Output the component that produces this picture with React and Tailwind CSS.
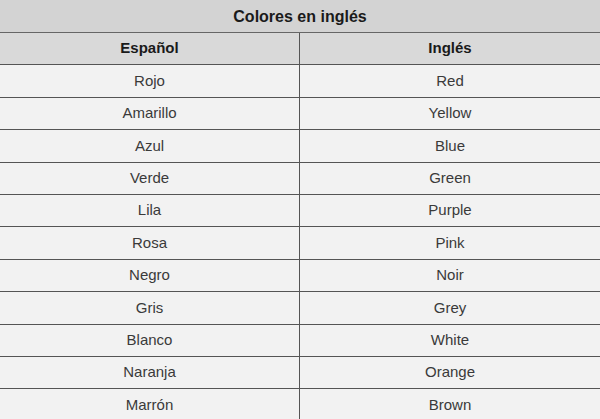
export default function App() {
  const rows = [
    ["Rojo", "Red"],
    ["Amarillo", "Yellow"],
    ["Azul", "Blue"],
    ["Verde", "Green"],
    ["Lila", "Purple"],
    ["Rosa", "Pink"],
    ["Negro", "Noir"],
    ["Gris", "Grey"],
    ["Blanco", "White"],
    ["Naranja", "Orange"],
    ["Marrón", "Brown"],
  ];
  return (
    <div className="w-[600px] h-[419px] overflow-hidden bg-[#f2f2f2] text-[#3a3a3a] font-['Liberation_Sans',Arial,sans-serif]">
      <div className="h-[33px] flex items-center justify-center bg-[#d3d3d3] border-b border-[#666] text-[16px] font-bold text-[#1a1a1a] pt-px">
        Colores en inglés
      </div>
      <div className="grid grid-cols-2 h-[32.4px] bg-[#d9d9d9] border-b border-[#555] text-[15px] font-bold text-[#1a1a1a]">
        <div className="flex items-center justify-center border-r border-[#555]">Español</div>
        <div className="flex items-center justify-center">Inglés</div>
      </div>
      {rows.map(([es, en]) => (
        <div key={es} className="grid grid-cols-2 h-[32.4px] border-b border-[#555] text-[15px]">
          <div className="flex items-center justify-center border-r border-[#555]">{es}</div>
          <div className="flex items-center justify-center">{en}</div>
        </div>
      ))}
    </div>
  );
}
